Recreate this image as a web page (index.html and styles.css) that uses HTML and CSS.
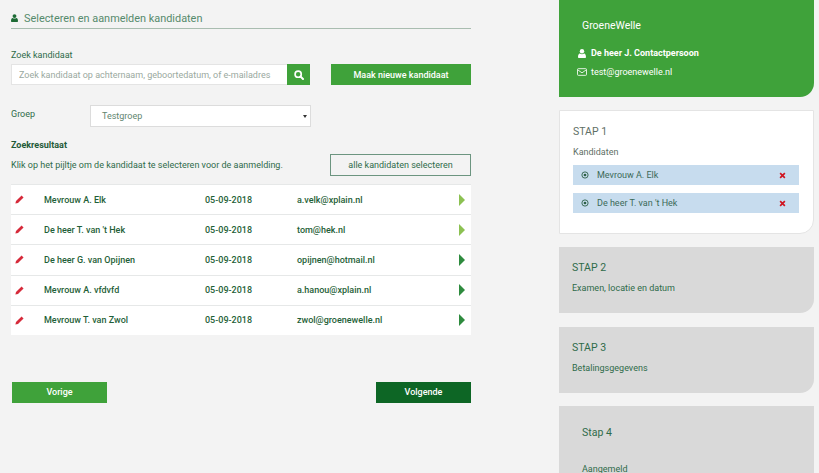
FILE: index.html
```html
<!DOCTYPE html>
<html lang="en">
<head>
    <meta charset="UTF-8">
    <title>Selecteren en aanmelden kandidaten</title>
    <link rel="stylesheet" href="styles.css">
</head>
<body>
    <div class="page">
        <div class="main">
            <h1 class="title">
                <svg class="title-icon" viewBox="0 0 8 9"><circle cx="4" cy="2.300" r="2.200"/><path d="M.8 9C.3 9 0 8.700 0 8.200 0 6.200.6 4.400 1.900 4.400c.6.500 1.300.8 2.100.8s1.500-.3 2.100-.8C7.400 4.400 8 6.200 8 8.200c0 .5-.3.8-.8.8z"/></svg>
                Selecteren en aanmelden kandidaten
            </h1>

            <label class="field-label">Zoek kandidaat</label>
            <div class="search-row">
                <div class="search">
                    <input class="search-input" type="text" placeholder="Zoek kandidaat op achternaam, geboortedatum, of e-mailadres">
                    <button class="search-btn">
                        <svg viewBox="0 0 12 12" width="10" height="10"><circle cx="5" cy="5" r="3.700" fill="none" stroke="#fff" stroke-width="2"/><path d="M7.800 7.800l3 3" stroke="#fff" stroke-width="2.400" stroke-linecap="round"/></svg>
                    </button>
                </div>
                <button class="new-btn">Maak nieuwe kandidaat</button>
            </div>

            <div class="group-row">
                <label class="group-label">Groep</label>
                <div class="select">Testgroep<span class="select-arrow"></span></div>
            </div>

            <h2 class="result-title">Zoekresultaat</h2>
            <div class="result-intro">
                <p>Klik op het pijltje om de kandidaat te selecteren voor de aanmelding.</p>
                <button class="all-btn">alle kandidaten selecteren</button>
            </div>

            <div class="results">
                <div class="row">
                    <svg class="pencil" viewBox="0 0 12 12"><path d="M8.800.6l2.600 2.600-7.400 7.400-3.500.8.800-3.500z"/></svg>
                    <span class="name">Mevrouw A. Elk</span>
                    <span class="date">05-09-2018</span>
                    <span class="email">a.velk@xplain.nl</span>
                    <span class="arrow light"></span>
                </div>
                <div class="row">
                    <svg class="pencil" viewBox="0 0 12 12"><path d="M8.800.6l2.600 2.600-7.400 7.400-3.500.8.800-3.500z"/></svg>
                    <span class="name">De heer T. van 't Hek</span>
                    <span class="date">05-09-2018</span>
                    <span class="email">tom@hek.nl</span>
                    <span class="arrow light"></span>
                </div>
                <div class="row">
                    <svg class="pencil" viewBox="0 0 12 12"><path d="M8.800.6l2.600 2.600-7.400 7.400-3.500.8.800-3.500z"/></svg>
                    <span class="name">De heer G. van Opijnen</span>
                    <span class="date">05-09-2018</span>
                    <span class="email">opijnen@hotmail.nl</span>
                    <span class="arrow"></span>
                </div>
                <div class="row">
                    <svg class="pencil" viewBox="0 0 12 12"><path d="M8.800.6l2.600 2.600-7.400 7.400-3.500.8.800-3.500z"/></svg>
                    <span class="name">Mevrouw A. vfdvfd</span>
                    <span class="date">05-09-2018</span>
                    <span class="email">a.hanou@xplain.nl</span>
                    <span class="arrow"></span>
                </div>
                <div class="row">
                    <svg class="pencil" viewBox="0 0 12 12"><path d="M8.800.6l2.600 2.600-7.400 7.400-3.500.8.800-3.500z"/></svg>
                    <span class="name">Mevrouw T. van Zwol</span>
                    <span class="date">05-09-2018</span>
                    <span class="email">zwol@groenewelle.nl</span>
                    <span class="arrow"></span>
                </div>
            </div>

            <div class="nav-row">
                <button class="nav-btn prev">Vorige</button>
                <button class="nav-btn next">Volgende</button>
            </div>
        </div>

        <div class="side">
            <div class="card account">
                <div class="company">GroeneWelle</div>
                <div class="contact strong">
                    <svg class="contact-user" viewBox="0 0 8 9" width="8" height="9"><circle fill="#fff" cx="4" cy="2.300" r="2.200"/><path fill="#fff" d="M.8 9C.3 9 0 8.700 0 8.200 0 6.200.6 4.400 1.900 4.400c.6.500 1.300.8 2.100.8s1.500-.3 2.100-.8C7.400 4.400 8 6.200 8 8.200c0 .5-.3.8-.8.8z"/></svg>
                    De heer J. Contactpersoon
                </div>
                <div class="contact">
                    <svg viewBox="0 0 12 12" width="10" height="10"><rect x=".6" y="2" width="10.800" height="8" rx="1" fill="none" stroke="#fff"/><path d="M1 3.500l5 3.500 5-3.500" fill="none" stroke="#fff"/></svg>
                    test@groenewelle.nl
                </div>
            </div>

            <div class="card step active">
                <div class="step-title">STAP 1</div>
                <div class="step-text">Kandidaten</div>
                <div class="chip">
                    <svg class="chip-dot" viewBox="0 0 10 10"><circle cx="5" cy="5" r="3.900" fill="none" stroke="#2c5f45" stroke-width="1.100"/><circle cx="5" cy="5" r="1.700" fill="#2c5f45"/></svg>
                    <span class="chip-name">Mevrouw A. Elk</span>
                    <svg class="chip-x" viewBox="0 0 8 8"><path d="M1.300 1.300l5.400 5.400M6.700 1.300L1.300 6.700" stroke="#d0141f" stroke-width="1.900"/></svg>
                </div>
                <div class="chip">
                    <svg class="chip-dot" viewBox="0 0 10 10"><circle cx="5" cy="5" r="3.900" fill="none" stroke="#2c5f45" stroke-width="1.100"/><circle cx="5" cy="5" r="1.700" fill="#2c5f45"/></svg>
                    <span class="chip-name">De heer T. van 't Hek</span>
                    <svg class="chip-x" viewBox="0 0 8 8"><path d="M1.300 1.300l5.400 5.400M6.700 1.300L1.300 6.700" stroke="#d0141f" stroke-width="1.900"/></svg>
                </div>
            </div>

            <div class="card step">
                <div class="step-title">STAP 2</div>
                <div class="step-text">Examen, locatie en datum</div>
            </div>

            <div class="card step">
                <div class="step-title">STAP 3</div>
                <div class="step-text">Betalingsgegevens</div>
            </div>

            <div class="card last">
                <div class="last-title">Stap 4</div>
                <div class="last-text">Aangemeld</div>
            </div>
        </div>
    </div>
</body>
</html>
```

FILE: styles.css
```css
html, body {
    height: 100%;
    overflow: hidden;
}

body {
    margin: 0;
    background-color: #f3f3f3;
    color: #2f6b4a;
    font-family: Roboto, "Liberation Sans", sans-serif;
    font-size: 9px;
}

button {
    font-family: inherit;
    border: none;
    cursor: pointer;
}

.page {
    display: flex;
    align-items: flex-start;
    height: 473px;
    overflow: hidden;
    padding-left: 11px;
}

.main {
    width: 460px;
    margin-right: 88px;
}

.title {
    display: flex;
    align-items: center;
    gap: 6px;
    height: 29px;
    margin: 0;
    box-sizing: border-box;
    padding-top: 8px;
    border-bottom: 1px solid #a9bdb0;
    font-size: 10.900px;
    font-weight: 400;
    color: #558a6c;
}

.title-icon {
    width: 7px;
    height: 8px;
    fill: #1d6b35;
}

.field-label {
    display: block;
    margin-top: 20px;
    height: 15px;
    line-height: 12px;
}

.search-row {
    display: flex;
    justify-content: space-between;
}

.search {
    display: flex;
    width: 299px;
    height: 21px;
}

.search-input {
    flex: 1;
    min-width: 0;
    box-sizing: border-box;
    padding: 0 7px;
    background: #fff;
    border: 1px solid #e4e4e4;
    border-right: none;
    font-family: inherit;
    font-size: 9px;
    outline: none;
}

.search-input::placeholder {
    color: #9aa9a0;
    opacity: 1;
}

.search-btn {
    display: flex;
    align-items: center;
    justify-content: center;
    width: 23px;
    padding: 0;
    background-color: #3fa23a;
}

.new-btn {
    width: 140px;
    height: 21px;
    background-color: #3fa23a;
    color: #fff;
    font-size: 9px;
    font-weight: 500;
}

.group-row {
    display: flex;
    align-items: center;
    margin-top: 20px;
}

.group-label {
    width: 79px;
    margin-top: -4px;
}

.select {
    position: relative;
    width: 221px;
    height: 22px;
    box-sizing: border-box;
    padding-left: 11px;
    line-height: 20px;
    background: #fff;
    border: 1px solid #dcdcdc;
    color: #5f8670;
}

.select-arrow {
    position: absolute;
    right: 3px;
    top: 9px;
    border-left: 2px solid transparent;
    border-right: 2px solid transparent;
    border-top: 3px solid #333;
}

.result-title {
    margin: 12px 0 0;
    height: 14px;
    line-height: 12px;
    font-size: 9px;
    font-weight: 700;
    color: #1f5a38;
}

.result-intro {
    display: flex;
    justify-content: space-between;
    align-items: center;
    height: 22px;
    margin-top: 1px;
}

.result-intro p {
    margin: 0;
}

.all-btn {
    width: 141px;
    height: 22px;
    box-sizing: border-box;
    padding: 0;
    background-color: transparent;
    border: 1px solid #6c9580;
    color: #2f6b4a;
    font-size: 9px;
}

.results {
    margin-top: 8px;
    background-color: #fff;
}

.row {
    display: flex;
    align-items: center;
    height: 29.200px;
    border-top: 1px solid #e6e8e8;
    font-weight: 500;
    color: #1f5f38;
}

.pencil {
    width: 9px;
    height: 9px;
    margin-left: 4px;
    margin-right: 20px;
    fill: #d62a3a;
}

.name {
    width: 161px;
}

.date {
    width: 92px;
}

.email {
    width: 162px;
}

.arrow {
    width: 0;
    height: 0;
    border-top: 6px solid transparent;
    border-bottom: 6px solid transparent;
    border-left: 6.500px solid #2e8b3e;
}

.arrow.light {
    border-left-color: #8cc152;
}

.nav-row {
    display: flex;
    justify-content: space-between;
    margin-top: 47px;
}

.nav-btn {
    width: 95px;
    height: 21px;
    padding: 0;
    color: #fff;
    font-size: 9px;
    font-weight: 500;
}

.prev {
    margin-left: 1px;
    background-color: #3fa23a;
}

.next {
    background-color: #0d6625;
}

.side {
    width: 255px;
    flex-shrink: 0;
}

.card {
    box-sizing: border-box;
    margin-bottom: 13px;
    border-bottom-right-radius: 14px;
}

.account {
    height: 97px;
    padding: 20px 23px 0 18px;
    background-color: #3fa23a;
    color: #fff;
}

.company {
    margin-left: 5px;
    margin-bottom: 12px;
    font-size: 10.500px;
    line-height: 12px;
}

.contact {
    display: flex;
    align-items: center;
    gap: 4px;
    height: 19px;
    line-height: 12px;
}

.contact.strong {
    height: 18px;
    font-weight: 700;
}

.contact-user {
    margin-left: 1px;
    margin-right: 1px;
}

.step {
    height: 66px;
    padding: 14px 13px 0;
    background-color: #d9d9d9;
    color: #2f6b4a;
}

.step-title {
    font-size: 10.500px;
    line-height: 14px;
    margin-bottom: 7px;
}

.step-text {
    line-height: 12px;
}

.step.active {
    height: 124px;
    background-color: #fff;
    border: 1px solid #e4e4e4;
    color: #5f6f66;
}

.step.active + .step {
    margin-bottom: 14px;
}

.chip {
    display: flex;
    align-items: center;
    width: 226px;
    height: 20px;
    margin-top: 7px;
    background-color: #c7dcee;
    color: #3c6a58;
}

.chip + .chip {
    margin-top: 8px;
}

.chip-dot {
    width: 8px;
    height: 8px;
    margin-left: 8px;
    margin-right: 8px;
}

.chip-name {
    width: 182px;
}

.chip-x {
    width: 7px;
    height: 7px;
}

.last {
    height: 67px;
    margin-bottom: 0;
    padding: 20px 23px 0;
    overflow: hidden;
    background-color: #d9d9d9;
    border-bottom-right-radius: 0;
}

.last-title {
    font-size: 10.500px;
    line-height: 14px;
    margin-bottom: 23px;
}

.last-text {
    line-height: 12px;
}
```
